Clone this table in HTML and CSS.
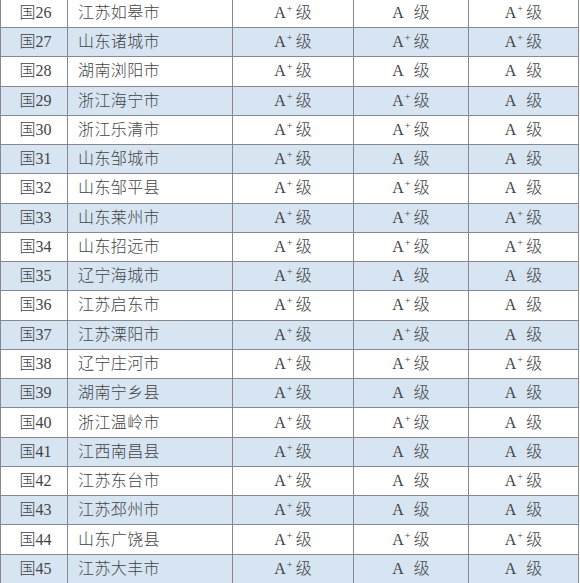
FILE: index.html
```html
<!DOCTYPE html>
<html lang="zh">
<head>
<meta charset="utf-8">
<link rel="stylesheet" href="styles.css">
</head>
<body>
<table class="tbl">
<colgroup><col class="c1"><col class="c2"><col class="c3"><col class="c4"><col class="c5"></colgroup>
<tbody>
<tr><td class="id">国26</td><td class="name">江苏如皋市</td><td><span class="g">A<span class="p">+</span>级</span></td><td><span class="g">A<span class="p"></span>级</span></td><td><span class="g">A<span class="p">+</span>级</span></td></tr>
<tr><td class="id">国27</td><td class="name">山东诸城市</td><td><span class="g">A<span class="p">+</span>级</span></td><td><span class="g">A<span class="p">+</span>级</span></td><td><span class="g">A<span class="p">+</span>级</span></td></tr>
<tr><td class="id">国28</td><td class="name">湖南浏阳市</td><td><span class="g">A<span class="p">+</span>级</span></td><td><span class="g">A<span class="p"></span>级</span></td><td><span class="g">A<span class="p"></span>级</span></td></tr>
<tr><td class="id">国29</td><td class="name">浙江海宁市</td><td><span class="g">A<span class="p">+</span>级</span></td><td><span class="g">A<span class="p">+</span>级</span></td><td><span class="g">A<span class="p"></span>级</span></td></tr>
<tr><td class="id">国30</td><td class="name">浙江乐清市</td><td><span class="g">A<span class="p">+</span>级</span></td><td><span class="g">A<span class="p">+</span>级</span></td><td><span class="g">A<span class="p"></span>级</span></td></tr>
<tr><td class="id">国31</td><td class="name">山东邹城市</td><td><span class="g">A<span class="p">+</span>级</span></td><td><span class="g">A<span class="p"></span>级</span></td><td><span class="g">A<span class="p"></span>级</span></td></tr>
<tr><td class="id">国32</td><td class="name">山东邹平县</td><td><span class="g">A<span class="p">+</span>级</span></td><td><span class="g">A<span class="p">+</span>级</span></td><td><span class="g">A<span class="p"></span>级</span></td></tr>
<tr><td class="id">国33</td><td class="name">山东莱州市</td><td><span class="g">A<span class="p">+</span>级</span></td><td><span class="g">A<span class="p">+</span>级</span></td><td><span class="g">A<span class="p">+</span>级</span></td></tr>
<tr><td class="id">国34</td><td class="name">山东招远市</td><td><span class="g">A<span class="p">+</span>级</span></td><td><span class="g">A<span class="p">+</span>级</span></td><td><span class="g">A<span class="p">+</span>级</span></td></tr>
<tr><td class="id">国35</td><td class="name">辽宁海城市</td><td><span class="g">A<span class="p">+</span>级</span></td><td><span class="g">A<span class="p"></span>级</span></td><td><span class="g">A<span class="p"></span>级</span></td></tr>
<tr><td class="id">国36</td><td class="name">江苏启东市</td><td><span class="g">A<span class="p">+</span>级</span></td><td><span class="g">A<span class="p">+</span>级</span></td><td><span class="g">A<span class="p"></span>级</span></td></tr>
<tr><td class="id">国37</td><td class="name">江苏溧阳市</td><td><span class="g">A<span class="p">+</span>级</span></td><td><span class="g">A<span class="p">+</span>级</span></td><td><span class="g">A<span class="p"></span>级</span></td></tr>
<tr><td class="id">国38</td><td class="name">辽宁庄河市</td><td><span class="g">A<span class="p">+</span>级</span></td><td><span class="g">A<span class="p">+</span>级</span></td><td><span class="g">A<span class="p">+</span>级</span></td></tr>
<tr><td class="id">国39</td><td class="name">湖南宁乡县</td><td><span class="g">A<span class="p">+</span>级</span></td><td><span class="g">A<span class="p"></span>级</span></td><td><span class="g">A<span class="p"></span>级</span></td></tr>
<tr><td class="id">国40</td><td class="name">浙江温岭市</td><td><span class="g">A<span class="p">+</span>级</span></td><td><span class="g">A<span class="p">+</span>级</span></td><td><span class="g">A<span class="p"></span>级</span></td></tr>
<tr><td class="id">国41</td><td class="name">江西南昌县</td><td><span class="g">A<span class="p">+</span>级</span></td><td><span class="g">A<span class="p"></span>级</span></td><td><span class="g">A<span class="p"></span>级</span></td></tr>
<tr><td class="id">国42</td><td class="name">江苏东台市</td><td><span class="g">A<span class="p">+</span>级</span></td><td><span class="g">A<span class="p"></span>级</span></td><td><span class="g">A<span class="p">+</span>级</span></td></tr>
<tr><td class="id">国43</td><td class="name">江苏邳州市</td><td><span class="g">A<span class="p">+</span>级</span></td><td><span class="g">A<span class="p"></span>级</span></td><td><span class="g">A<span class="p"></span>级</span></td></tr>
<tr><td class="id">国44</td><td class="name">山东广饶县</td><td><span class="g">A<span class="p">+</span>级</span></td><td><span class="g">A<span class="p">+</span>级</span></td><td><span class="g">A<span class="p">+</span>级</span></td></tr>
<tr><td class="id">国45</td><td class="name">江苏大丰市</td><td><span class="g">A<span class="p">+</span>级</span></td><td><span class="g">A<span class="p"></span>级</span></td><td><span class="g">A<span class="p"></span>级</span></td></tr>
</tbody>
</table>
</body>
</html>
```
FILE: styles.css
```css
html, body {
  margin: 0;
  padding: 0;
  background: #ffffff;
  overflow: hidden;
}
.tbl {
  border-collapse: collapse;
  table-layout: fixed;
  width: 578px;
  margin-top: -2.3px;
  font-family: "Liberation Serif", "Noto Sans CJK SC", serif;
  font-size: 16px;
  font-weight: 300;
  color: #444444;
}
.c1 { width: 67px; }
.c2 { width: 165px; }
.c3 { width: 121px; }
.c4 { width: 115px; }
.c5 { width: 110px; }
.tbl td {
  height: 29.28px;
  padding: 0;
  border: 1px solid #868a90;
  text-align: center;
  vertical-align: middle;
  line-height: 1;
  box-sizing: border-box;
  white-space: nowrap;
}
.tbl tr:nth-child(even) td {
  background: #d7e5f3;
}
.tbl td.id {
  text-align: center;
  padding-left: 3px;
}
.tbl td.name {
  text-align: left;
  padding-left: 10px;
  letter-spacing: 0.4px;
}
.g {
  display: inline-flex;
  align-items: baseline;
}
.p {
  display: inline-block;
  width: 10px;
  font-size: 10px;
  position: relative;
  top: -6px;
  text-align: left;
  padding-left: 1px;
  box-sizing: border-box;
}
```
